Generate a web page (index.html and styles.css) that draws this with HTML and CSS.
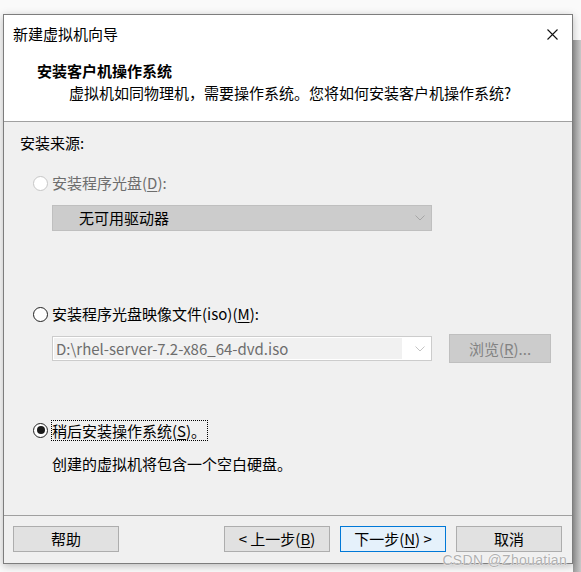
FILE: index.html
```html
<!DOCTYPE html>
<html lang="zh-CN">
<head>
<meta charset="utf-8">
<title>新建虚拟机向导</title>
<link rel="stylesheet" href="styles.css">
</head>
<body>
<div class="desk-strip"></div>
<div class="window">
  <div class="titlebar">
    <span class="title">新建虚拟机向导</span>
    <svg class="close" width="11" height="11" viewBox="0 0 11 11"><path d="M0.5 0.5 L10.5 10.5 M10.5 0.5 L0.5 10.5" stroke="#111" stroke-width="1.1" fill="none"/></svg>
  </div>
  <div class="header">
    <div class="h-title">安装客户机操作系统</div>
    <div class="h-sub">虚拟机如同物理机，需要操作系统。您将如何安装客户机操作系统?</div>
  </div>
  <div class="content">
    <div class="label">安装来源:</div>
    <div class="radio-row disabled r1">
      <span class="radio"></span>
      <span class="rtext">安装程序光盘(<u>D</u>):</span>
    </div>
    <div class="select disabled-select">
      <span class="select-text">无可用驱动器</span>
      <svg class="chev" width="10" height="6" viewBox="0 0 10 6"><path d="M0.5 0.5 L5 5 L9.5 0.5" stroke="#a6a6a6" fill="none"/></svg>
    </div>
    <div class="radio-row r2">
      <span class="radio"></span>
      <span class="rtext">安装程序光盘映像文件(iso)(<u>M</u>):</span>
    </div>
    <div class="combo-row">
      <div class="combo">
        <span class="combo-field">D:\rhel-server-7.2-x86_64-dvd.iso</span>
        <svg class="chev" width="10" height="6" viewBox="0 0 10 6"><path d="M0.5 0.5 L5 5 L9.5 0.5" stroke="#c4c4c4" fill="none"/></svg>
      </div>
      <div class="browse">浏览(<u>R</u>)...</div>
    </div>
    <div class="radio-row r3">
      <span class="radio checked"></span>
      <span class="rtext focus">稍后安装操作系统(<u>S</u>)。</span>
    </div>
    <div class="desc">创建的虚拟机将包含一个空白硬盘。</div>
  </div>
  <div class="footer">
    <div class="btn">帮助</div>
    <div class="btn-group">
      <div class="btn">&lt; 上一步(<u>B</u>)</div>
      <div class="btn primary">下一步(<u>N</u>) &gt;</div>
      <div class="btn">取消</div>
    </div>
  </div>
  <div class="watermark">CSDN @Zhouatian</div>
</div>
</body>
</html>
```

FILE: styles.css
```css
* { box-sizing: border-box; }
html, body { margin: 0; padding: 0; }
body {
  width: 581px;
  height: 572px;
  overflow: hidden;
  background: #fafafa;
  font-family: "Noto Sans CJK SC", "Noto Sans", sans-serif;
  font-size: 15px;
  color: #000;
  position: relative;
}
.desk-strip {
  position: absolute;
  left: 573px;
  top: 40px;
  width: 8px;
  height: 532px;
  background: linear-gradient(to right, #9a9a9a, #c9c9c9);
}
.window {
  position: relative;
  margin: 14px 0 0 3px;
  width: 570px;
  border: 1px solid #7d7d7d;
  background: #f0f0f0;
  box-shadow: 0 2px 8px rgba(0,0,0,0.25);
  display: flex;
  flex-direction: column;
}
.titlebar {
  height: 37px;
  background: #fff;
  display: flex;
  align-items: center;
  justify-content: space-between;
  padding: 0 14px 0 9px;
}
.title { line-height: 20px; }
.close { display: block; margin-top: 1px; }
.header {
  background: #fff;
  padding: 8px 0 17px 0;
  border-bottom: 1px solid #a0a0a0;
}
.h-title {
  font-weight: bold;
  line-height: 22px;
  padding-left: 33px;
}
.h-sub {
  line-height: 22px;
  padding-left: 65px;
}
.content {
  height: 393px;
  padding: 10px 0 0 16px;
  display: flex;
  flex-direction: column;
  align-items: flex-start;
}
.label { line-height: 22px; }
.radio-row {
  display: flex;
  align-items: center;
  height: 22px;
  margin-left: 13px;
}
.r1 { margin-top: 18px; }
.r2 { margin-top: 72px; }
.r3 { margin-top: 56px; }
.radio {
  width: 15px;
  height: 15px;
  border-radius: 50%;
  border: 1px solid #222;
  background: #fff;
  margin-right: 4px;
  display: flex;
  align-items: center;
  justify-content: center;
}
.radio.checked::after {
  content: "";
  width: 8px;
  height: 8px;
  border-radius: 50%;
  background: #1a1a1a;
}
.disabled .radio { border-color: #c6c6c6; }
.disabled .rtext { color: #6d6d6d; }
.rtext { line-height: 20px; }
.focus {
  outline: 1px dotted #000;
  outline-offset: 0;
  padding: 0 1px 0 0;
  line-height: 19px;
}
.select {
  margin: 11px 0 0 32px;
  width: 380px;
  height: 26px;
  display: flex;
  align-items: center;
  justify-content: space-between;
}
.disabled-select {
  background: #cccccc;
  border: 1px solid #bfbfbf;
  padding: 0 6px 0 26px;
}
.select-text { line-height: 20px; }
.combo-row {
  margin: 9px 0 0 32px;
  display: flex;
  align-items: center;
}
.combo {
  width: 380px;
  height: 25px;
  border: 1px solid #cccccc;
  background: #fff;
  display: flex;
  align-items: center;
  padding: 1px 6px 1px 1px;
}
.combo-field {
  flex: 1;
  height: 21px;
  background: #f1f1f1;
  color: #6d6d6d;
  line-height: 21px;
  padding-left: 2px;
  margin-right: 13px;
}
.browse {
  margin-left: 17px;
  width: 102px;
  height: 29px;
  background: #cccccc;
  border: 1px solid #bfbfbf;
  color: #838383;
  display: flex;
  align-items: center;
  justify-content: center;
}
.desc {
  margin: 12px 0 0 32px;
  line-height: 22px;
}
.footer {
  border-top: 1px solid #a0a0a0;
  height: 48px;
  padding: 10px 10px 0 9px;
  display: flex;
  justify-content: space-between;
  align-items: flex-start;
}
.btn-group { display: flex; gap: 10px; }
.btn {
  width: 106px;
  height: 26px;
  background: #e1e1e1;
  border: 1px solid #adadad;
  display: flex;
  align-items: center;
  justify-content: center;
  line-height: 20px;
}
.btn.primary {
  background: #e5f1fb;
  border-color: #0078d7;
}
u { text-underline-offset: 2px; }
.watermark {
  position: absolute;
  right: 5px;
  bottom: -3px;
  line-height: 12px;
  font-family: "Liberation Sans", "Noto Sans", sans-serif;
  font-size: 14px;
  letter-spacing: 0.3px;
  color: #b0b0b0;
  text-shadow: 0 0 1px #fff, 0 0 2px #fff;
}
```
